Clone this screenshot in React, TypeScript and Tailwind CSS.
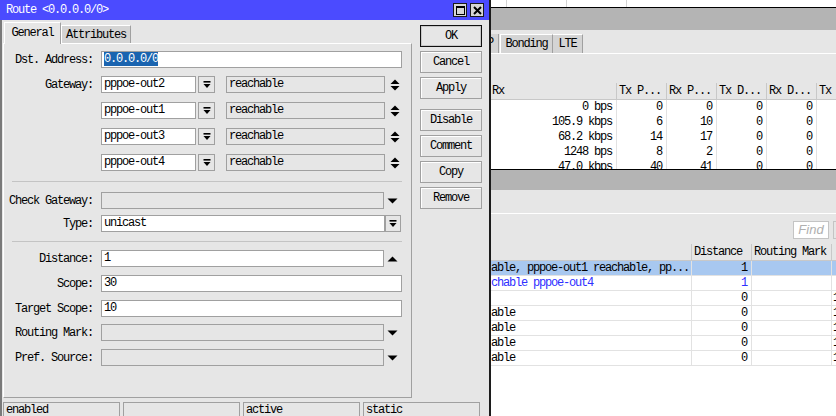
import React from "react";

const mono = "font-['Liberation_Mono',monospace] text-[12px] tracking-[-1.2px]";

function DropIcon() {
  return (
    <svg width="8" height="8" viewBox="0 0 8 8">
      <rect x="0.5" y="0" width="7" height="1.6" fill="#000" />
      <polygon points="0.5,3 7.5,3 4,7" fill="#000" />
    </svg>
  );
}
function UpDown() {
  return (
    <svg width="10" height="12" viewBox="0 0 10 12">
      <polygon points="0.5,5 9.5,5 5,0.5" fill="#000" />
      <polygon points="0.5,7 9.5,7 5,11.5" fill="#000" />
    </svg>
  );
}
function Down() {
  return (
    <svg width="11" height="6" viewBox="0 0 11 6">
      <polygon points="0.5,0.5 10.5,0.5 5.5,5.5" fill="#000" />
    </svg>
  );
}
function Up() {
  return (
    <svg width="11" height="6" viewBox="0 0 11 6">
      <polygon points="0.5,5.5 10.5,5.5 5.5,0.5" fill="#000" />
    </svg>
  );
}

function Row({ label, mt, children }: { label: string; mt: string; children: React.ReactNode }) {
  return (
    <div className={`flex h-[17px] items-center ${mt}`}>
      <div className="w-[89px] whitespace-pre text-right">{label}</div>
      <div className="ml-[8px] flex h-[17px] items-center">{children}</div>
    </div>
  );
}

const whiteInput = "h-[17px] border border-[#a0a0a0] bg-white pl-[2px] leading-[15px] whitespace-pre overflow-hidden";
const grayInput = "h-[17px] border border-[#a0a0a0] bg-[#e6e6e6] pl-[2px] leading-[15px] whitespace-pre overflow-hidden";

function GatewayRow({ name, mt, label }: { name: string; mt: string; label: string }) {
  return (
    <Row label={label} mt={mt}>
      <div className={`${whiteInput} w-[95px]`}>{name}</div>
      <div className="ml-[2px] flex h-[17px] w-[17px] items-center justify-center border border-[#a0a0a0] bg-[#e6e6e6]">
        <DropIcon />
      </div>
      <div className={`${grayInput} ml-[11px] w-[159px]`}>reachable</div>
      <div className="ml-[2px] flex w-[15px] justify-center">
        <UpDown />
      </div>
    </Row>
  );
}

function Btn({ children, def, mt }: { children: React.ReactNode; def?: boolean; mt: string }) {
  return (
    <div
      className={`flex h-[22px] w-[62px] items-center justify-center bg-[#e6e6e6] ${mt} ${
        def
          ? "border border-[#101010] shadow-[inset_0_0_0_1px_#c8c8c8]"
          : "border border-[#a0a0a0] shadow-[inset_1px_1px_0_#ffffff]"
      }`}
    >
      {children}
    </div>
  );
}

function Cell({ w, children, cls }: { w: string; children?: React.ReactNode; cls?: string }) {
  return (
    <div className={`${w} shrink-0 overflow-hidden whitespace-pre border-r border-[#c8c8c8] ${cls ?? ""}`}>{children}</div>
  );
}

export default function App() {
  const traffic = [
    ["0 bps", "0", "0", "0", "0"],
    ["105.9 kbps", "6", "10", "0", "0"],
    ["68.2 kbps", "14", "17", "0", "0"],
    ["1248 bps", "8", "2", "0", "0"],
    ["47.0 kbps", "40", "41", "0", "0"],
  ];
  const routes: { t: string; d: string; sel?: boolean; blue?: boolean; last?: string }[] = [
    { t: "able, pppoe-out1 reachable, pp...", d: "1", sel: true },
    { t: "chable pppoe-out4", d: "1", blue: true },
    { t: "", d: "0", last: "1" },
    { t: "able", d: "0", last: "1" },
    { t: "able", d: "0", last: "1" },
    { t: "able", d: "0", last: "1" },
    { t: "able", d: "0", last: "1" },
  ];

  return (
    <div className={`flex h-[416px] w-[836px] overflow-hidden bg-white text-black ${mono}`}>
      {/* Dialog */}
      <div className="flex h-full w-[491px] shrink-0 flex-col border-r-2 border-[#1c1c1c] bg-[#e6e6e6]">
        {/* title bar */}
        <div className="flex h-[20px] shrink-0 items-center bg-[#4b4bff] pl-[6px] pr-[5px]">
          <span className="leading-[20px] text-white">Route &lt;0.0.0.0/0&gt;</span>
          <div className="ml-auto flex gap-[3px]">
            <div className="flex h-[14px] w-[14px] items-center justify-center border border-[#1a1a1a] bg-[#d6d6d6]">
              <svg width="9" height="9" viewBox="0 0 9 9">
                <rect x="0.5" y="0.5" width="8" height="8" fill="none" stroke="#000" strokeWidth="1" />
                <rect x="0" y="0" width="9" height="2" fill="#000" />
              </svg>
            </div>
            <div className="flex h-[14px] w-[14px] items-center justify-center border border-[#1a1a1a] bg-[#d6d6d6]">
              <svg width="9" height="9" viewBox="0 0 9 9">
                <path d="M1 1 L8 8 M8 1 L1 8" stroke="#000" strokeWidth="2" />
              </svg>
            </div>
          </div>
        </div>

        {/* body */}
        <div className="flex flex-1 flex-col border-l-2 border-[#7a7a7a]">
          <div className="flex h-[380px]">
            {/* left: tabs + panel */}
            <div className="ml-[1px] flex w-[409px] flex-col pt-[2px]">
              <div className="flex h-[21px] items-end">
                <div className="relative z-10 mb-[-1px] ml-[1px] flex h-[22px] w-[57px] items-center justify-center border-l border-t border-r border-l-white border-t-white border-r-[#a0a0a0] bg-[#e6e6e6] pb-[1px]">
                  General
                </div>
                <div className="flex h-[18px] w-[70px] items-center justify-center border-l border-t border-r border-l-white border-t-white border-r-[#a0a0a0] bg-[#d4d4d4]">
                  Attributes
                </div>
              </div>
              <div className="flex h-[355px] flex-col border border-l-white border-t-white border-r-[#a0a0a0] border-b-[#a0a0a0]">
                <Row label="Dst. Address:" mt="mt-[7px]">
                  <div className={`${whiteInput} w-[301px]`}>
                    <span className="bg-[#1a64b0] text-white">0.0.0.0/0</span>
                  </div>
                </Row>
                <GatewayRow label="Gateway:" name="pppoe-out2" mt="mt-[8px]" />
                <GatewayRow label="" name="pppoe-out1" mt="mt-[9px]" />
                <GatewayRow label="" name="pppoe-out3" mt="mt-[9px]" />
                <GatewayRow label="" name="pppoe-out4" mt="mt-[9px]" />
                <div className="ml-[8px] mt-[10px] h-px w-[390px] bg-[#c4c4c4]" />
                <Row label="Check Gateway:" mt="mt-[10px]">
                  <div className={`${grayInput} w-[283px]`}></div>
                  <div className="flex w-[17px] justify-center">
                    <Down />
                  </div>
                </Row>
                <Row label="Type:" mt="mt-[6px]">
                  <div className={`${whiteInput} w-[284px]`}>unicast</div>
                  <div className="flex h-[17px] w-[16px] items-center justify-center border border-[#a0a0a0] bg-[#e6e6e6]">
                    <DropIcon />
                  </div>
                </Row>
                <div className="ml-[8px] mt-[9px] h-px w-[390px] bg-[#c4c4c4]" />
                <Row label="Distance:" mt="mt-[8px]">
                  <div className={`${whiteInput} w-[283px]`}>1</div>
                  <div className="flex w-[17px] justify-center">
                    <Up />
                  </div>
                </Row>
                <Row label="Scope:" mt="mt-[8px]">
                  <div className={`${whiteInput} w-[301px]`}>30</div>
                </Row>
                <Row label="Target Scope:" mt="mt-[8px]">
                  <div className={`${whiteInput} w-[301px]`}>10</div>
                </Row>
                <Row label="Routing Mark:" mt="mt-[7px]">
                  <div className={`${grayInput} w-[283px]`}></div>
                  <div className="flex w-[17px] justify-center">
                    <Down />
                  </div>
                </Row>
                <Row label="Pref. Source:" mt="mt-[8px]">
                  <div className={`${grayInput} w-[283px]`}></div>
                  <div className="flex w-[17px] justify-center">
                    <Down />
                  </div>
                </Row>
              </div>
            </div>
            {/* buttons */}
            <div className="ml-[8px] flex flex-col pt-[5px]">
              <Btn def mt="mt-0">OK</Btn>
              <Btn mt="mt-[4px]">Cancel</Btn>
              <Btn mt="mt-[4px]">Apply</Btn>
              <Btn mt="mt-[10px]">Disable</Btn>
              <Btn mt="mt-[4px]">Comment</Btn>
              <Btn mt="mt-[4px]">Copy</Btn>
              <Btn mt="mt-[4px]">Remove</Btn>
            </div>
          </div>
          {/* status bar */}
          <div className="flex gap-[3px] pl-[1px] pt-[2px]">
            <div className="h-[16px] w-[117px] border border-[#a0a0a0] pl-[2px] leading-[14px]">enabled</div>
            <div className="h-[16px] w-[117px] border border-[#a0a0a0]" />
            <div className="h-[16px] w-[117px] border border-[#a0a0a0] pl-[2px] leading-[14px]">active</div>
            <div className="h-[16px] w-[117px] border border-[#a0a0a0] pl-[2px] leading-[14px]">static</div>
          </div>
        </div>
      </div>

      {/* Background window (right) */}
      <div className="flex h-full w-[345px] shrink-0 flex-col overflow-hidden bg-white">
        <div className="flex h-[8px] shrink-0 border-b border-black bg-white">
          <div className="w-[16px] border-r border-[#d4d4d4]" />
          <div className="w-[60px] border-r border-[#d4d4d4]" />
          <div className="w-[60px] border-r border-[#d4d4d4]" />
        </div>
        <div className="h-[22px] shrink-0 bg-[#b4b4b4]" />
        <div className="flex h-[24px] shrink-0 items-end border-b border-white bg-[#e6e6e6]">
          <div className="h-[19px] w-[8px] overflow-hidden border-r border-[#a0a0a0] bg-[#d4d4d4] leading-[18px]">
            <span className="ml-[-4px]">P</span>
          </div>
          <div className="ml-[1px] flex h-[19px] w-[53px] items-center justify-center border-l border-t border-r border-l-white border-t-white border-r-[#a0a0a0] bg-[#d4d4d4]">
            Bonding
          </div>
          <div className="flex h-[19px] w-[30px] items-center justify-center border-t border-r border-t-white border-r-[#a0a0a0] bg-[#d4d4d4]">
            LTE
          </div>
        </div>
        <div className="h-[29px] shrink-0 bg-[#e6e6e6]" />
        <div className="flex h-[17px] shrink-0 border-b border-[#c8c8c8] bg-[#e6e6e6] leading-[16px]">
          <Cell w="w-[126px]" cls="pl-[1px]">Rx</Cell>
          <Cell w="w-[50px]" cls="pl-[2px]">Tx P...</Cell>
          <Cell w="w-[50px]" cls="pl-[2px]">Rx P...</Cell>
          <Cell w="w-[50px]" cls="pl-[2px]">Tx D...</Cell>
          <Cell w="w-[50px]" cls="pl-[2px]">Rx D...</Cell>
          <Cell w="w-[30px]" cls="pl-[2px]">Tx</Cell>
        </div>
        <div className="h-[69px] shrink-0 overflow-hidden bg-white">
          {traffic.map((r, i) => (
            <div key={i} className="flex h-[15px] leading-[15px]">
              <div className="w-[126px] shrink-0 border-r border-[#e2e2e2] pr-[4px] text-right">{r[0]}</div>
              <div className="w-[50px] shrink-0 border-r border-[#e2e2e2] pr-[4px] text-right">{r[1]}</div>
              <div className="w-[50px] shrink-0 border-r border-[#e2e2e2] pr-[4px] text-right">{r[2]}</div>
              <div className="w-[50px] shrink-0 border-r border-[#e2e2e2] pr-[4px] text-right">{r[3]}</div>
              <div className="w-[50px] shrink-0 border-r border-[#e2e2e2] pr-[4px] text-right">{r[4]}</div>
              <div className="w-[30px] shrink-0" />
            </div>
          ))}
        </div>
        <div className="h-px shrink-0 bg-black" />
        <div className="h-[20px] shrink-0 bg-[#b4b4b4]" />
        <div className="h-[24px] shrink-0 border-b border-white bg-[#e6e6e6]" />
        <div className="flex h-[30px] shrink-0 gap-[4px] bg-[#e6e6e6] pl-[302px] pt-[7px]">
          <div className="flex h-[18px] w-[36px] shrink-0 items-center justify-center border border-[#c4c4c4] bg-white font-['Liberation_Sans',sans-serif] text-[13px] italic tracking-normal text-[#b0b0b0]">
            Find
          </div>
          <div className="h-[18px] w-[20px] shrink-0 border border-[#c4c4c4] bg-[#e6e6e6]" />
        </div>
        <div className="flex h-[17px] shrink-0 border-b border-[#c8c8c8] bg-[#e6e6e6] leading-[16px]">
          <Cell w="w-[201px]" />
          <Cell w="w-[60px]" cls="pl-[2px]">Distance</Cell>
          <Cell w="w-[80px]" cls="pl-[2px]">Routing Mark</Cell>
          <Cell w="w-[20px]" />
        </div>
        {routes.map((r, i) => (
          <div
            key={i}
            className={`flex h-[15px] shrink-0 border-b border-[#e2e2e2] leading-[14px] ${
              r.sel ? "bg-[#a8c8f0]" : "bg-white"
            } ${r.blue ? "text-[#2f2fff]" : "text-black"}`}
          >
            <div className="w-[201px] shrink-0 overflow-hidden whitespace-pre border-r border-[#e2e2e2]">{r.t}</div>
            <div className="w-[60px] shrink-0 border-r border-[#e2e2e2] pr-[4px] text-right">{r.d}</div>
            <div className="w-[80px] shrink-0 border-r border-[#e2e2e2]" />
            <div className="w-[20px] shrink-0 pl-[1px]">{r.last ?? ""}</div>
          </div>
        ))}
        <div className="flex-1 bg-white" />
      </div>
    </div>
  );
}
